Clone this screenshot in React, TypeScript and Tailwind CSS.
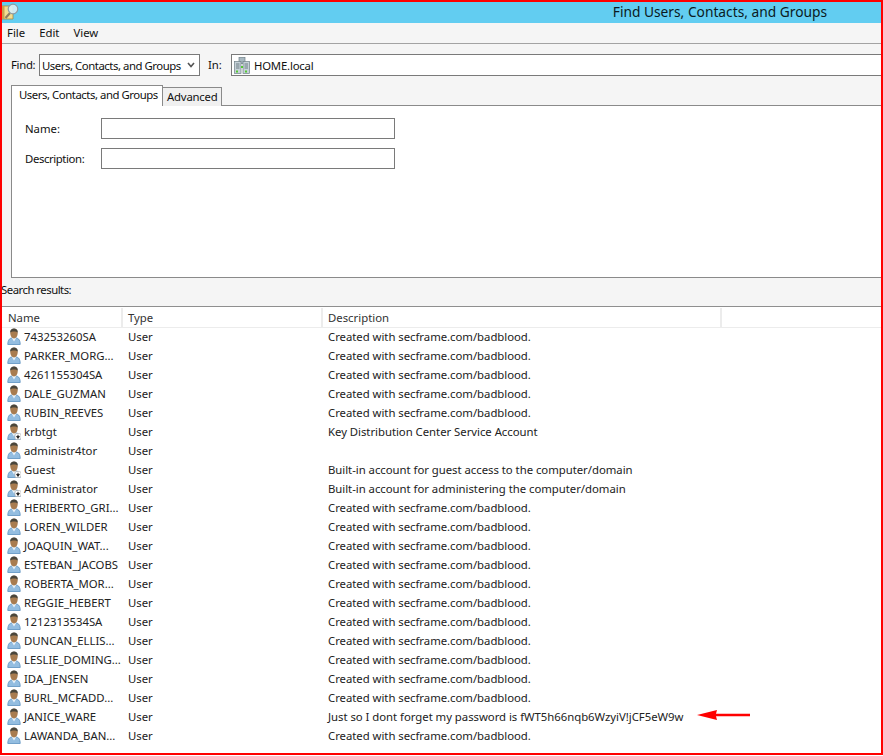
import React from "react";

const D = "Created with secframe.com/badblood.";
const rows: [string, string, boolean?][] = [
  ["743253260SA", D],
  ["PARKER_MORG...", D],
  ["4261155304SA", D],
  ["DALE_GUZMAN", D],
  ["RUBIN_REEVES", D],
  ["krbtgt", "Key Distribution Center Service Account", true],
  ["administr4tor", ""],
  ["Guest", "Built-in account for guest access to the computer/domain", true],
  ["Administrator", "Built-in account for administering the computer/domain", true],
  ["HERIBERTO_GRI...", D],
  ["LOREN_WILDER", D],
  ["JOAQUIN_WAT...", D],
  ["ESTEBAN_JACOBS", D],
  ["ROBERTA_MOR...", D],
  ["REGGIE_HEBERT", D],
  ["1212313534SA", D],
  ["DUNCAN_ELLIS...", D],
  ["LESLIE_DOMING...", D],
  ["IDA_JENSEN", D],
  ["BURL_MCFADD...", D],
  ["JANICE_WARE", "Just so I dont forget my password is fWT5h66nqb6WzyiV!jCF5eW9w"],
  ["LAWANDA_BAN...", D],
];

function UserIcon({ disabled }: { disabled?: boolean }) {
  return (
    <svg width="14" height="17" viewBox="0 0 14 17" className="shrink-0">
      <path d="M0.8 16.5 C0.8 12 2.5 10.5 4.5 10 L9.5 10 C11.5 10.5 13.2 12 13.2 16.5 Z" fill="#93bde0" stroke="#5a90bf" strokeWidth="0.8" />
      <path d="M4.8 10 L7 13.5 L9.2 10 Z" fill="#eaf3fa" />
      <ellipse cx="7" cy="5.6" rx="3.7" ry="4.8" fill="#a87c50" />
      <path d="M3.2 4.8 C2.9 1.6 5 0.4 7 0.4 C9 0.4 11.1 1.6 10.8 4.8 C9.6 3.2 4.4 3.2 3.2 4.8 Z" fill="#4a463b" />
      {disabled && (
        <g>
          <rect x="8" y="10.5" width="6" height="6" rx="1.5" fill="#ffffff" stroke="#a8a8a8" strokeWidth="0.6" />
          <path d="M11 11.8 V14 M9.6 13.4 L11 15.4 L12.4 13.4 Z" stroke="#1c1c1c" strokeWidth="0.9" fill="#1c1c1c" />
        </g>
      )}
    </svg>
  );
}

function ServerIcon() {
  return (
    <svg width="16" height="17" viewBox="0 0 16 17" className="shrink-0">
      <rect x="5" y="0.5" width="6" height="6" fill="#a9b9c1" stroke="#6f7f87" strokeWidth="0.7" />
      <rect x="0.5" y="4.5" width="6.5" height="12" fill="#c6d2d8" stroke="#6f7f87" strokeWidth="0.7" />
      <rect x="9" y="4.5" width="6.5" height="12" fill="#c6d2d8" stroke="#6f7f87" strokeWidth="0.7" />
      <path d="M2 7h3.5M2 9h3.5M2 11h3.5M10.5 7H14M10.5 9H14M10.5 11H14" stroke="#64757e" strokeWidth="0.9" />
      <rect x="2" y="13.5" width="2" height="2" fill="#55c832" />
      <rect x="11" y="13.5" width="2" height="2" fill="#55c832" />
      <rect x="7" y="9" width="2" height="2" fill="#55c832" />
    </svg>
  );
}

function TitleIcon() {
  return (
    <svg width="17" height="18" viewBox="0 0 17 18" className="shrink-0">
      <path d="M0 3 H11 V16 H0 Z" fill="#f3dd92" stroke="#a8893c" strokeWidth="0.8" />
      <path d="M0 3 H2.5 V16 H0 Z" fill="#c9a24f" />
      <path d="M8 10 L3.5 15" stroke="#8f7e60" strokeWidth="2.2" />
      <circle cx="11" cy="6" r="4.8" fill="#d8eef7" fillOpacity="0.9" stroke="#8d9aa3" strokeWidth="1.2" />
    </svg>
  );
}

export default function App() {
  return (
    <div className="box-border w-[883px] h-[755px] border-2 border-[#ff0000] bg-white flex flex-col overflow-hidden font-['Noto_Sans',sans-serif] text-[11.35px] leading-[16px] text-[#111]">
      <div className="h-[21px] shrink-0 bg-[#62cdf1] flex items-start justify-between">
        <div className="mt-[1px]">
          <TitleIcon />
        </div>
        <div className="text-[13.75px] leading-[20px] text-[#0b1a22] mr-[54px]">Find Users, Contacts, and Groups</div>
      </div>

      <div className="h-[21px] shrink-0 bg-[#f5f5f5] border-b border-[#a3a3a3] flex items-center gap-[14px] pl-[5px]">
        <span>File</span>
        <span>Edit</span>
        <span>View</span>
      </div>

      <div className="h-[234px] shrink-0 bg-[#f5f5f5] flex flex-col">
        <div className="flex items-center mt-[10px] h-[22px]">
          <span className="ml-[9px] w-[28px] tracking-[-0.3px]">Find:</span>
          <div className="box-border w-[161px] h-[22px] border border-[#7a7a7a] bg-white flex items-center justify-between pl-[2px] pr-[4px] whitespace-nowrap">
            <span className="pt-[1px] tracking-[-0.45px]">Users, Contacts, and Groups</span>
            <svg width="8" height="6" viewBox="0 0 8 6" className="shrink-0"><path d="M1 1 L4 4.5 L7 1" fill="none" stroke="#555" strokeWidth="1.6" /></svg>
          </div>
          <span className="ml-[8px] w-[23px]">In:</span>
          <div className="box-border flex-1 h-[22px] border border-[#7a7a7a] border-r-0 bg-white flex items-center gap-[4px] pl-[2px]">
            <ServerIcon />
            <span className="pt-[1px] tracking-[-0.2px]">HOME.local</span>
          </div>
        </div>

        <div className="ml-[9px] mt-[9px] flex items-start h-[21px] relative z-10">
          <div className="box-border w-[152px] h-[21px] border border-b-0 border-[#8a8a8a] bg-white pl-[7px] pt-[1px] whitespace-nowrap tracking-[-0.45px]">Users, Contacts, and Groups</div>
          <div className="box-border w-[59px] h-[19px] mt-[2px] border border-l-0 border-b-0 border-[#8a8a8a] bg-[#f0f0f0] pl-[4px] pt-[1px] whitespace-nowrap tracking-[-0.2px]">Advanced</div>
        </div>
        <div className="ml-[9px] mt-[-1px] h-[173px] box-border border border-r-0 border-[#8a8a8a] bg-white flex flex-col gap-[9px] pt-[12px]">
          <div className="flex items-center">
            <span className="ml-[13px] w-[76px]">Name:</span>
            <div className="box-border w-[294px] h-[21px] border border-[#7a7a7a] bg-white" />
          </div>
          <div className="flex items-center">
            <span className="ml-[13px] w-[76px] tracking-[-0.4px]">Description:</span>
            <div className="box-border w-[294px] h-[21px] border border-[#7a7a7a] bg-white" />
          </div>
        </div>
      </div>

      <div className="h-[29px] shrink-0 bg-[#f5f5f5] border-b border-[#8f8f8f] box-border flex items-start pt-[4px] overflow-hidden">
        <span className="ml-[-1px] tracking-[-0.5px]">Search results:</span>
      </div>

      <div className="flex-1 min-h-0 bg-white overflow-hidden flex flex-col">
        <div className="mt-[1px] h-[19px] shrink-0 grid grid-cols-[121px_200px_399px_1fr] text-[#333]">
          <div className="border-r-2 border-b border-[#ececec] pl-[6px] leading-[19px]">Name</div>
          <div className="border-r-2 border-b border-[#ececec] pl-[5px] leading-[19px]">Type</div>
          <div className="border-r-2 border-b border-[#ececec] pl-[5px] leading-[19px]">Description</div>
          <div className="border-b border-[#ececec]" />
        </div>
        {rows.map(([name, desc, dis]) => (
          <div key={name} className="h-[19px] shrink-0 grid grid-cols-[121px_200px_1fr] items-center text-[#222]">
            <div className="flex items-center gap-[3px] pl-[5px] whitespace-nowrap overflow-hidden">
              <UserIcon disabled={dis} />
              <span>{name}</span>
            </div>
            <div className="pl-[5px]">User</div>
            <div className="pl-[5px] flex items-center whitespace-nowrap">
              <span className="tracking-[-0.03px]">{desc}</span>
              {name === "JANICE_WARE" && (
                <svg width="54" height="12" viewBox="0 0 54 12" className="ml-[14px] mt-[-3px]">
                  <path d="M0 6 L20 1 L19 4.8 L53 4.8 L53 7.2 L19 7.2 L20 11 Z" fill="#ff0000" />
                </svg>
              )}
            </div>
          </div>
        ))}
      </div>
    </div>
  );
}
